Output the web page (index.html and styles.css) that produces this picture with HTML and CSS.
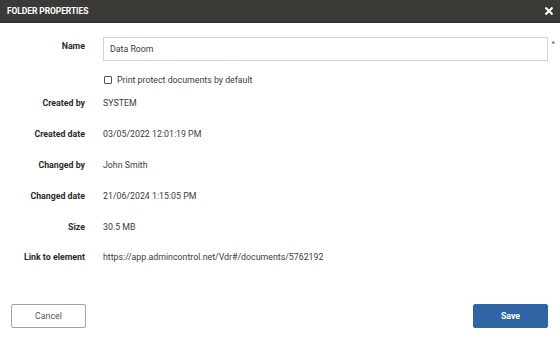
FILE: index.html
```html
<!DOCTYPE html>
<html lang="en">
<head>
    <meta charset="UTF-8">
    <meta name="viewport" content="width=device-width, initial-scale=1.0">
    <title>Folder Properties</title>
    <link rel="stylesheet" href="styles.css">
</head>
<body>
    <div class="dialog">
        <div class="dialog-header">
            <h1>FOLDER PROPERTIES</h1>
            <button class="close-btn" type="button" aria-label="Close">
                <svg width="8" height="8" viewBox="0 0 8 8">
                    <path d="M1.2 1.2 L6.8 6.8 M6.8 1.2 L1.2 6.8" stroke="#fff" stroke-width="2" stroke-linecap="square"/>
                </svg>
            </button>
        </div>

        <div class="dialog-body">
            <div class="field name-field">
                <label class="field-label" for="folderName">Name</label>
                <div class="field-value">
                    <input type="text" id="folderName" class="text-input" value="Data Room">
                    <span class="required">*</span>
                </div>
            </div>

            <div class="field check-field">
                <span class="field-label"></span>
                <label class="checkbox">
                    <span class="box"></span>
                    Print protect documents by default
                </label>
            </div>

            <div class="field info-row">
                <span class="field-label">Created by</span>
                <span class="field-value">SYSTEM</span>
            </div>
            <div class="field info-row">
                <span class="field-label">Created date</span>
                <span class="field-value">03/05/2022 12:01:19 PM</span>
            </div>
            <div class="field info-row">
                <span class="field-label">Changed by</span>
                <span class="field-value">John Smith</span>
            </div>
            <div class="field info-row">
                <span class="field-label">Changed date</span>
                <span class="field-value">21/06/2024 1:15:05 PM</span>
            </div>
            <div class="field info-row">
                <span class="field-label">Size</span>
                <span class="field-value">30.5 MB</span>
            </div>
            <div class="field info-row">
                <span class="field-label">Link to element</span>
                <span class="field-value">https://app.admincontrol.net/Vdr#/documents/5762192</span>
            </div>
        </div>

        <div class="dialog-footer">
            <button type="button" class="btn btn-cancel">Cancel</button>
            <button type="button" class="btn btn-save">Save</button>
        </div>
    </div>
</body>
</html>
```

FILE: styles.css
```css
:root {
    --header: #3a3b37;
    --label: #2b2b2b;
    --text: #3c3c3c;
    --border: #d4d4d4;
    --primary: #2f64a5;
}

* {
    margin: 0;
    padding: 0;
    box-sizing: border-box;
    font-family: Roboto, 'Liberation Sans', sans-serif;
}

body {
    background: #fff;
    width: 560px;
    height: 340px;
}

.dialog {
    height: 340px;
    display: flex;
    flex-direction: column;
}

.dialog-header {
    height: 23px;
    background: var(--header);
    display: flex;
    align-items: center;
    justify-content: space-between;
    padding: 0 7px 0 7px;
    border-bottom: 1px solid #2c2d2a;
}

.dialog-header h1 {
    color: #fff;
    font-size: 8.5px;
    font-weight: 700;
    letter-spacing: -0.1px;
}

.close-btn {
    background: none;
    border: none;
    width: 8px;
    height: 8px;
    display: flex;
    cursor: pointer;
}

.dialog-body {
    flex: 1;
    padding: 14px 12px 0 0;
}

.field {
    display: grid;
    grid-template-columns: 85px 1fr;
    column-gap: 18px;
    font-size: 8.8px;
}

.field-label {
    text-align: right;
    font-weight: 700;
    color: var(--label);
}

.field-value {
    color: var(--text);
}

.name-field .field-label {
    padding-top: 4px;
}

.name-field .field-value {
    position: relative;
}

.text-input {
    width: 100%;
    height: 24px;
    border: 1px solid var(--border);
    padding: 0 6px;
    font-size: 8.8px;
    color: var(--text);
    outline: none;
}

.required {
    position: absolute;
    right: -7px;
    top: 2px;
    color: #555;
    font-size: 8px;
}

.check-field {
    margin: 12px 0 1px;
}

.checkbox {
    display: flex;
    align-items: center;
    gap: 5px;
    color: var(--text);
    margin-left: 1px;
    line-height: 14px;
}

.checkbox .box {
    width: 8px;
    height: 8px;
    border: 1px solid #555;
    border-radius: 1px;
}

.info-row {
    height: 30.8px;
    align-items: center;
}

.dialog-footer {
    display: flex;
    justify-content: space-between;
    padding: 0 12px 12px 11px;
}

.btn {
    width: 75px;
    height: 24px;
    font-size: 8.8px;
    border-radius: 2px;
    cursor: pointer;
}

.btn-cancel {
    background: #fff;
    border: 1px solid #a5a5a5;
    color: #555;
}

.btn-save {
    background: var(--primary);
    border: 1px solid var(--primary);
    color: #fff;
    font-weight: 700;
}
```
